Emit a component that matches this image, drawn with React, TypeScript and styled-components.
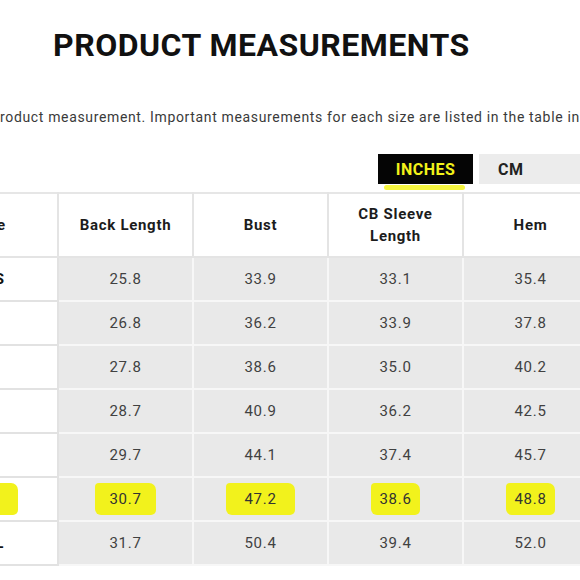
import React from "react";
import styled, { createGlobalStyle } from "styled-components";

const Global = createGlobalStyle`
  html, body { margin: 0; padding: 0; background: #fff; }
  body { width: 580px; height: 580px; overflow: hidden; font-family: Roboto, "Liberation Sans", sans-serif; }
`;

const Page = styled.div`
  width: 580px;
  height: 580px;
  overflow: hidden;
  display: flex;
  flex-direction: column;
`;

const Title = styled.h1`
  margin: 25px 0 0 53px;
  font-family: Roboto, "Liberation Sans", sans-serif;
  font-weight: 700;
  font-size: 32px;
  line-height: 40px;
  letter-spacing: 0.5px;
  color: #111;
  white-space: nowrap;
`;

const Intro = styled.p`
  margin: 43px 0 0 0;
  font-size: 14px;
  line-height: 18px;
  letter-spacing: 0.65px;
  color: #3a3a3a;
  white-space: nowrap;
  overflow: hidden;
`;

const ToggleRow = styled.div`
  display: flex;
  justify-content: flex-end;
  gap: 6px;
  margin: 28px -40px 0 0;
`;

const ToggleButton = styled.div<{ $active?: boolean }>`
  position: relative;
  height: 30px;
  width: ${(p) => (p.$active ? "95px" : "141px")};
  display: flex;
  align-items: center;
  justify-content: ${(p) => (p.$active ? "center" : "flex-start")};
  padding-left: ${(p) => (p.$active ? "0" : "19px")};
  box-sizing: border-box;
  background: ${(p) => (p.$active ? "#050505" : "#ececec")};
  color: ${(p) => (p.$active ? "#f2f21a" : "#222")};
  font-weight: 700;
  font-size: 16px;
  letter-spacing: 0.5px;
`;

const Underline = styled.span`
  position: absolute;
  left: 6px;
  right: 8px;
  bottom: -6px;
  height: 5px;
  background: #f4f42a;
  border-radius: 3px;
  opacity: 0.9;
`;

const TableClip = styled.div`
  margin-top: 8px;
  overflow: hidden;
  width: 580px;
`;

const Table = styled.table`
  margin-left: -77px;
  border-collapse: collapse;
  table-layout: fixed;
  width: 675px;
  border-top: 2px solid #e6e6e6;
`;

const HeadCell = styled.th`
  width: 135px;
  height: 64px;
  padding: 0 8px;
  box-sizing: border-box;
  background: #fff;
  border-right: 2px solid #e4e4e4;
  border-bottom: 2px solid #e4e4e4;
  font-weight: 700;
  font-size: 15px;
  line-height: 22px;
  letter-spacing: 0.7px;
  color: #1c1c1c;
  text-align: center;
  vertical-align: middle;
`;

const Cell = styled.td<{ $label?: boolean }>`
  height: 44px;
  padding: 0;
  box-sizing: border-box;
  text-align: center;
  vertical-align: middle;
  font-size: 15px;
  letter-spacing: 0.7px;
  font-weight: ${(p) => (p.$label ? 700 : 400)};
  color: ${(p) => (p.$label ? "#111" : "#414141")};
  background: ${(p) => (p.$label ? "#fff" : "#e9e9e9")};
  border-right: 2px solid ${(p) => (p.$label ? "#e2e2e2" : "#f7f7f7")};
  border-bottom: 2px solid ${(p) => (p.$label ? "#e2e2e2" : "#f7f7f7")};
`;

const Mark = styled.span<{ $pad: number }>`
  display: inline-block;
  background: #f2f21c;
  padding: 7px ${(p) => p.$pad}px;
  border-radius: 4px 7px 5px 6px;
  color: #333;
`;

const headers = ["Size", "Back Length", "Bust", "CB Sleeve Length", "Hem"];

const rows: { size: string; values: string[]; marked?: boolean }[] = [
  { size: "2XS", values: ["25.8", "33.9", "33.1", "35.4"] },
  { size: "XS", values: ["26.8", "36.2", "33.9", "37.8"] },
  { size: "S", values: ["27.8", "38.6", "35.0", "40.2"] },
  { size: "M", values: ["28.7", "40.9", "36.2", "42.5"] },
  { size: "L", values: ["29.7", "44.1", "37.4", "45.7"] },
  { size: "XL", values: ["30.7", "47.2", "38.6", "48.8"], marked: true },
  { size: "2XL", values: ["31.7", "50.4", "39.4", "52.0"] },
];

const markPads = [14, 18, 8, 8];

export default function App() {
  return (
    <Page>
      <Global />
      <Title>PRODUCT MEASUREMENTS</Title>
      <Intro>
        roduct measurement. Important measurements for each size are listed in the table in
      </Intro>
      <ToggleRow>
        <ToggleButton $active>
          INCHES
          <Underline />
        </ToggleButton>
        <ToggleButton>CM</ToggleButton>
      </ToggleRow>
      <TableClip>
        <Table>
          <thead>
            <tr>
              {headers.map((h, i) => (
                <HeadCell key={h}>
                  {i === 3 ? (
                    <>
                      CB Sleeve
                      <br />
                      Length
                    </>
                  ) : (
                    h
                  )}
                </HeadCell>
              ))}
            </tr>
          </thead>
          <tbody>
            {rows.map((r) => (
              <tr key={r.size}>
                <Cell $label>
                  {r.marked ? <Mark $pad={18}>{r.size}</Mark> : r.size}
                </Cell>
                {r.values.map((v, i) => (
                  <Cell key={i}>
                    {r.marked ? <Mark $pad={markPads[i]}>{v}</Mark> : v}
                  </Cell>
                ))}
              </tr>
            ))}
          </tbody>
        </Table>
      </TableClip>
    </Page>
  );
}
